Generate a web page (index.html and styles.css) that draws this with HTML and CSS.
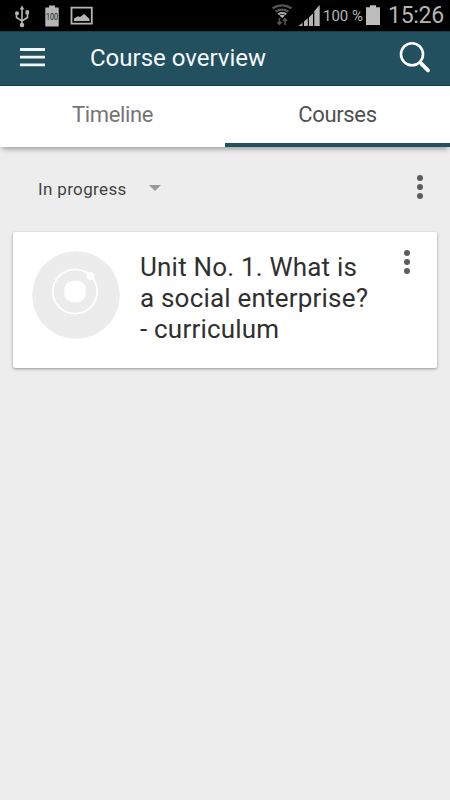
FILE: index.html
```html
<!DOCTYPE html>
<html lang="en">
<head>
<meta charset="UTF-8">
<meta name="viewport" content="width=device-width, initial-scale=1.0">
<title>Course overview</title>
<link rel="stylesheet" href="styles.css">
</head>
<body>
    <div class="status-bar">
        <svg class="status-left" width="100" height="31" viewBox="0 0 100 31">
            <!-- usb -->
            <g fill="#b5b5b5" stroke="#b5b5b5">
                <path d="M22 8v17M16.500 14v3.500l5.500 3.500 5.500-3.500v-3.500" fill="none" stroke-width="1.600"/>
                <path d="M22 5.500l2.300 4h-4.600z" stroke="none"/>
                <circle cx="22" cy="25" r="2.300" stroke="none"/>
                <circle cx="17" cy="13.300" r="2" stroke="none"/>
                <path d="M25.500 10.300h3.500v4h-3.500z" stroke="none"/>
            </g>
            <path d="M45.300 7.500h3.700V5.500h6v2h3.700v19h-13.400z" fill="#b5b5b5"/>
            <text class="battery-label" x="46" y="20" textLength="12" lengthAdjust="spacingAndGlyphs">100</text>
            <!-- picture -->
            <path d="M71.500 7.700h20.300v16H71.500z" fill="none" stroke="#b5b5b5" stroke-width="1.800"/>
            <path d="M74 21v-2.500l4-2.300 2 .8 4.300-3 5.200 5V21z" fill="#b5b5b5"/>
        </svg>
        <div class="status-right">
            <svg width="50" height="31" viewBox="270 0 50 31">
                <!-- wifi -->
                <g fill="none" stroke-width="2.200">
                    <path d="M272.500 8.300q9.500-6 19 0M275.500 11.700q6.500-4.200 13 0" stroke="#555"/>
                    <path d="M278.200 14.300q4-2.600 8 0" stroke="#aaa"/>
                </g>
                <path d="M279.500 15.500q2.700-1.700 5.400 0l-2.700 2.500z" fill="#bbb"/>
                <path d="M279.500 18v6m-2-2l2 2.300 2-2.300M285 25v-6m-2 2l2-2.300 2 2.300" fill="none" stroke="#555" stroke-width="1.600"/>
                <!-- signal -->
                <path d="M298.500 26l4-3.300V26zM304 21.500l3.800-3.200V26H304zM309 17.300l4-3.700V26H309zM314.300 11l5.400-6V26h-5.400z" fill="#b5b5b5"/>
            </svg>
            <span class="percent">100&nbsp;%</span>
            <svg class="battery" width="16" height="31" viewBox="365 0 16 31">
                <path d="M366 7.200h4V5.300h6v1.900h4V25h-14z" fill="#bcbcbc"/>
            </svg>
            <span class="clock">15:26</span>
        </div>
    </div>

    <div class="header">
        <svg class="menu-icon" width="25" height="19" viewBox="0 0 25 19">
            <path d="M0 1.500h25M0 9.200h25M0 16.800h25" stroke="#f3f6f7" stroke-width="2.800"/>
        </svg>
        <h1 class="header-title">Course overview</h1>
        <svg class="search-icon" width="32" height="32" viewBox="399 40 32 32">
            <circle cx="412" cy="53.300" r="11" fill="none" stroke="#fff" stroke-width="2.600"/>
            <path d="M419.700 61l2 2" stroke="#fff" stroke-width="3"/>
            <path d="M421 62.300l7 7" stroke="#fff" stroke-width="3.800" stroke-linecap="round"/>
        </svg>
    </div>

    <div class="tabs">
        <div class="tab"><span>Timeline</span></div>
        <div class="tab active"><span>Courses</span></div>
    </div>

    <div class="filter">
        <span class="filter-label">In progress</span>
        <span class="arrow"></span>
        <div class="dots">
            <i></i><i></i><i></i>
        </div>
    </div>

    <div class="card">
        <svg class="thumb" width="88" height="88" viewBox="0 0 88 88">
            <circle cx="44" cy="44" r="43.800" fill="#ececec"/>
            <circle cx="43" cy="40.500" r="22.200" fill="none" stroke="#fff" stroke-width="1.800"/>
            <rect x="32.300" y="29.700" width="21.500" height="21.500" rx="9" fill="#fff"/>
            <circle cx="58.500" cy="25" r="3.900" fill="#fff"/>
        </svg>
        <h2 class="card-title">Unit No. 1. What is<br>a social enterprise?<br>- curriculum</h2>
        <div class="dots">
            <i></i><i></i><i></i>
        </div>
    </div>
</body>
</html>
```
FILE: styles.css
```css
body {
    margin: 0;
    height: 800px;
    overflow: hidden;
    background-color: #ededed;
    font-family: Roboto, sans-serif;
    color: #303030;
}
svg {
    display: block;
    flex-shrink: 0;
}
.status-bar {
    display: flex;
    justify-content: space-between;
    height: 31px;
    background-color: #000;
    color: #b5b5b5;
}
.battery-label {
    font-size: 9px;
    fill: #111;
}
.status-right {
    display: flex;
    width: 180px;
    line-height: 31px;
    white-space: nowrap;
}
.percent {
    width: 42px;
    margin-left: 3px;
    font-size: 15px;
    line-height: 33px;
}
.clock {
    margin-left: 7px;
    font-size: 23px;
    letter-spacing: -0.3px;
}
.header {
    box-sizing: border-box;
    display: flex;
    align-items: center;
    height: 55px;
    padding: 0 19px 0 20px;
    background-color: #22505f;
    border-top: 1px solid #173e4b;
    border-bottom: 1px solid #123f50;
}
.menu-icon {
    margin-bottom: 2px;
}
.header-title {
    flex: 1;
    margin: 0 0 1px 45px;
    font-size: 24px;
    font-weight: 400;
    color: #f5f8f9;
}
.search-icon {
    margin-bottom: 4px;
}
.tabs {
    display: flex;
    height: 61px;
    background-color: #fff;
    box-shadow: 0 4px 5px -2px rgba(0, 0, 0, 0.35);
}
.tab {
    box-sizing: border-box;
    flex: 1;
    text-align: center;
    font-size: 22px;
    line-height: 57px;
    letter-spacing: -0.35px;
    color: #757575;
}
.tab.active {
    color: #505050;
    border-bottom: 4px solid #22505f;
}
.filter {
    display: flex;
    align-items: center;
    height: 85px;
    padding: 0 27px 0 38px;
}
.filter-label {
    width: 111px;
    margin-bottom: 2px;
    font-size: 17px;
    letter-spacing: 0.35px;
    color: #444;
}
.arrow {
    margin-bottom: 3px;
    border: 6px solid transparent;
    border-top-color: #999;
    border-bottom: 0;
}
.dots {
    display: flex;
    flex-direction: column;
    gap: 3px;
    margin-left: auto;
}
.filter .dots {
    margin-bottom: 6px;
}
.dots i {
    width: 6px;
    height: 6px;
    border-radius: 50%;
    background-color: #5c5c5c;
}
.card {
    box-sizing: border-box;
    display: flex;
    align-items: flex-start;
    height: 136px;
    margin: 0 13px;
    padding: 19px 27px 0 19px;
    background-color: #fff;
    border-radius: 2px;
    box-shadow: 0 1px 3px rgba(0, 0, 0, 0.38);
}
.card-title {
    margin: 1px 0 0 20px;
    font-size: 26px;
    font-weight: 400;
    line-height: 31px;
    letter-spacing: 0.2px;
    white-space: nowrap;
}
.card .dots {
    margin-top: -1px;
}
```
